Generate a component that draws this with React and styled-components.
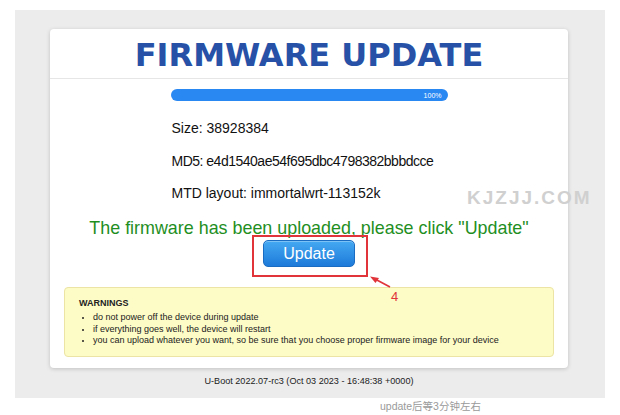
import React from "react";
import styled, { createGlobalStyle } from "styled-components";

const Global = createGlobalStyle`
  html, body { margin: 0; padding: 0; background: #ffffff; }
  body { font-family: "Liberation Sans", Arial, sans-serif; color: #111; }
`;

const Page = styled.div`
  position: relative;
  width: 620px;
  height: 415px;
  padding: 10px 0 0 15px;
  box-sizing: border-box;
  overflow: hidden;
`;

const Panel = styled.div`
  width: 590px;
  height: 388px;
  background: #ececec;
  box-sizing: border-box;
  padding: 19px 37px 0 35px;
`;

const Card = styled.div`
  width: 518px;
  height: 339px;
  background: #fff;
  border-radius: 4px;
  box-shadow: 0 1px 4px rgba(0, 0, 0, 0.18);
  display: flex;
  flex-direction: column;
`;

const Header = styled.div`
  height: 49px;
  border-bottom: 1px solid #e6e6e6;
  display: flex;
  align-items: center;
  justify-content: center;
`;

const Title = styled.h1`
  margin: 0;
  font-family: "DejaVu Sans", Verdana, sans-serif;
  font-weight: bold;
  font-size: 32px;
  color: #2651a6;
  line-height: 1;
  padding-top: 2px;
`;

const Body = styled.div`
  display: flex;
  flex-direction: column;
  align-items: center;
  padding-top: 10px;
`;

const Bar = styled.div`
  width: 277px;
  height: 12px;
  border-radius: 6px;
  background: #2a88f3;
  display: flex;
  align-items: center;
  justify-content: flex-end;
  padding-right: 6px;
  box-sizing: border-box;
  color: #fff;
  font-size: 7px;
`;

const Info = styled.div`
  width: 277px;
  margin-left: 2px;
  display: flex;
  flex-direction: column;
  gap: 16.5px;
  margin-top: 19px;
`;

const Line = styled.p`
  margin: 0;
  font-size: 14px;
  line-height: 16px;
  white-space: nowrap;
  color: #111;
  letter-spacing: ${(p) => (p.$tight ? "-0.5px" : "0")};
`;

const Notice = styled.p`
  margin: 17px 0 0;
  font-size: 17.9px;
  line-height: 20px;
  color: #1f8f1f;
  white-space: nowrap;
`;

const Highlight = styled.span`
  position: relative;
  display: inline-flex;
  margin-top: -3px;
  padding: 3px 11px 8px 9px;
  border: 2px solid #e0343a;
  margin-left: 2px;
`;

const Button = styled.button`
  width: 92px;
  height: 27px;
  border-radius: 5px;
  border: 1px solid #1a6cc2;
  background: linear-gradient(#45a9f2, #1d7ad9);
  color: #fff;
  font-family: "Liberation Sans", Arial, sans-serif;
  font-size: 16px;
  padding: 0;
  box-shadow: inset 0 1px 0 rgba(255, 255, 255, 0.3);
`;

const Arrow = styled.svg`
  position: absolute;
  left: 115px;
  top: 39px;
  overflow: visible;
`;

const Warnings = styled.div`
  align-self: stretch;
  margin: 10px 14px 0;
  height: 70px;
  box-sizing: border-box;
  background: #fdfbc6;
  border: 1px solid #ece4a4;
  border-radius: 4px;
  padding: 10px 14px 0;
`;

const WarnTitle = styled.div`
  font-size: 9px;
  font-weight: bold;
  color: #222;
  line-height: 11px;
`;

const WarnList = styled.ul`
  margin: 3px 0 0;
  padding-left: 14px;
  font-size: 9px;
  line-height: 11.5px;
  color: #222;
  white-space: nowrap;
  li::marker { font-size: 8px; }
`;

const Footer = styled.div`
  text-align: center;
  font-size: 9.1px;
  color: #222;
  margin-top: 8px;
`;

const Caption = styled.div`
  margin: 2px 0 0 365px;
  font-family: "Liberation Sans", "Noto Sans CJK SC", sans-serif;
  font-size: 10.5px;
  line-height: 12px;
  color: #9a9a9a;
`;

const Watermark = styled.div`
  position: absolute;
  left: 467px;
  top: 187px;
  font-family: "Liberation Sans", Arial, sans-serif;
  font-weight: bold;
  font-size: 19px;
  letter-spacing: 2px;
  color: #d0d0d0;
`;

export default function App() {
  return (
    <>
      <Global />
      <Page>
        <Panel>
          <Card>
            <Header>
              <Title>FIRMWARE UPDATE</Title>
            </Header>
            <Body>
              <Bar>100%</Bar>
              <Info>
                <Line>Size: 38928384</Line>
                <Line $tight>MD5: e4d1540ae54f695dbc4798382bbbdcce</Line>
                <Line>MTD layout: immortalwrt-113152k</Line>
              </Info>
              <Notice>The firmware has been uploaded, please click "Update"</Notice>
              <Highlight>
                <Button>Update</Button>
                <Arrow width="40" height="40" viewBox="0 0 40 40">
                  <line x1="21" y1="11" x2="6" y2="3" stroke="#e0343a" strokeWidth="1.6" />
                  <polygon points="1,0.5 10,2 6.5,7" fill="#e0343a" />
                  <text x="22" y="25" fill="#e0343a" fontSize="13" fontFamily="Liberation Sans, Arial, sans-serif">4</text>
                </Arrow>
              </Highlight>
              <Warnings>
                <WarnTitle>WARNINGS</WarnTitle>
                <WarnList>
                  <li>do not power off the device during update</li>
                  <li>if everything goes well, the device will restart</li>
                  <li>you can upload whatever you want, so be sure that you choose proper firmware image for your device</li>
                </WarnList>
              </Warnings>
            </Body>
          </Card>
          <Footer>U-Boot 2022.07-rc3 (Oct 03 2023 - 16:48:38 +0000)</Footer>
        </Panel>
        <Caption>update后等3分钟左右</Caption>
        <Watermark>KJZJJ.COM</Watermark>
      </Page>
    </>
  );
}
